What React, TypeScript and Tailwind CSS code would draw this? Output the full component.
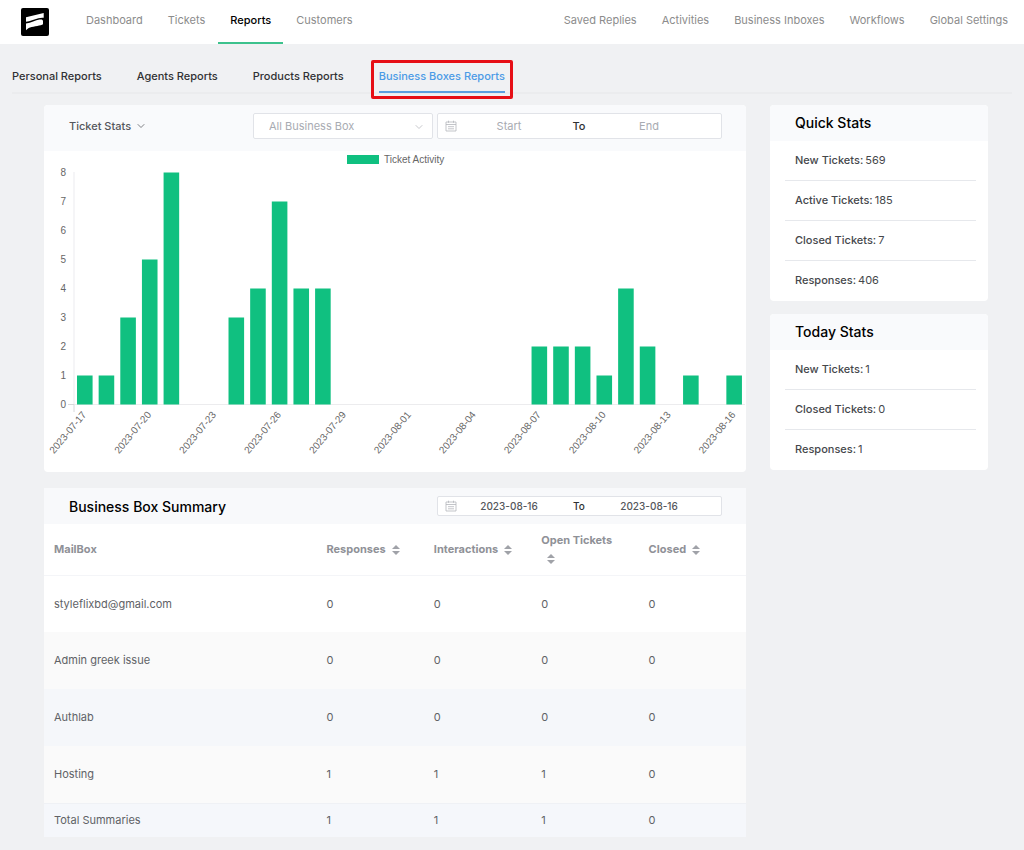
import clsx from 'clsx';
import { ChevronDown } from 'lucide-react';

const mainLinks = ['Dashboard', 'Tickets', 'Reports', 'Customers'];
const sideLinks = ['Saved Replies', 'Activities', 'Business Inboxes', 'Workflows', 'Global Settings'];
const reportTabs = ['Personal Reports', 'Agents Reports', 'Products Reports', 'Business Boxes Reports'];

const activity = [
  1, 1, 3, 5, 8, 0, 0, 3, 4, 7, 4, 4, 0, 0, 0, 0, 0, 0, 0, 0, 0, 2, 2, 2, 1, 4, 2, 0, 1, 0, 1,
];
const dateLabels = [
  '2023-07-17',
  '2023-07-20',
  '2023-07-23',
  '2023-07-26',
  '2023-07-29',
  '2023-08-01',
  '2023-08-04',
  '2023-08-07',
  '2023-08-10',
  '2023-08-13',
  '2023-08-16',
];

const columns = ['Responses', 'Interactions', 'Open Tickets', 'Closed'];
const mailboxes = [
  { name: 'styleflixbd@gmail.com', values: [0, 0, 0, 0], bg: 'bg-white' },
  { name: 'Admin greek issue', values: [0, 0, 0, 0], bg: 'bg-[#fafafa]' },
  { name: 'Authlab', values: [0, 0, 0, 0], bg: 'bg-[#f5f7fa]' },
  { name: 'Hosting', values: [1, 1, 1, 0], bg: 'bg-[#fafafa]' },
];

const quickStats = [
  { label: 'New Tickets', value: 569 },
  { label: 'Active Tickets', value: 185 },
  { label: 'Closed Tickets', value: 7 },
  { label: 'Responses', value: 406 },
];
const todayStats = [
  { label: 'New Tickets', value: 1 },
  { label: 'Closed Tickets', value: 0 },
  { label: 'Responses', value: 1 },
];

function Logo() {
  return (
    <svg viewBox="0 0 28 28" className="h-7 w-7" role="img" aria-label="Home">
      <rect width="28" height="28" rx="2" fill="#000" />
      <path d="M5 9.3L22.7 5V9.8C21 9.6 19 9.8 17.5 10.2C13 11.3 9 13.2 5 13.7Z" fill="#fff" />
      <path
        d="M5 15.6C10 15 14.5 12.2 18.5 11.5C20.8 11.1 22 11.7 22 13V16.3C20 17.6 13 18.3 9 19.6C7.2 20.3 6 21.2 5 22.3Z"
        fill="#fff"
      />
    </svg>
  );
}

function Header() {
  return (
    <header className="flex h-11 items-center justify-between bg-white pr-1 pl-[21px] text-[11px] text-[#8c8c8c]">
      <div className="flex h-full items-center">
        <a href="#home" className="mr-[25px]">
          <Logo />
        </a>
        <nav className="flex h-full gap-px">
          {mainLinks.map((link) => (
            <a
              key={link}
              href="#main"
              className={clsx(
                'h-full border-b-2 px-3 pt-3 leading-4',
                link === 'Reports' ? 'border-[#3dc28d] font-medium text-black' : 'border-transparent',
              )}
            >
              {link}
            </a>
          ))}
        </nav>
      </div>
      <nav className="flex h-full gap-px">
        {sideLinks.map((link) => (
          <a key={link} href="#side" className="px-3 pt-3 leading-4">
            {link}
          </a>
        ))}
      </nav>
    </header>
  );
}

function Tabs() {
  return (
    <nav className="mx-3 flex h-[50px] gap-[35px] border-b-2 border-[#ebecee] text-[11px] font-medium text-[#303133]">
      {reportTabs.map((tab) => {
        const active = tab === 'Business Boxes Reports';
        return (
          <a
            key={tab}
            href="#reports"
            className={clsx('relative h-[49px] pt-6 leading-4', active && 'border-b-2 border-[#5b9fe0] text-[#4c9be6]')}
          >
            {tab}
            {active && <span className="absolute -inset-x-2 top-4 -bottom-2 rounded-xs border-3 border-[#e60f16]" />}
          </a>
        );
      })}
    </nav>
  );
}

function DateIcon() {
  return (
    <svg viewBox="0 0 12 12" className="h-3 w-3 shrink-0" fill="none" stroke="#b4b6bb" strokeWidth="0.8">
      <path d="M1 2H11V11H1ZM1 4.5H11M3.5 0.7V2.8M8.5 0.7V2.8M3 6.7H9M3 8.8H9" />
    </svg>
  );
}

function DateRange({ name, start = '', end = '', compact = false }: {
  name: string;
  start?: string;
  end?: string;
  compact?: boolean;
}) {
  return (
    <div
      className={clsx(
        'flex w-[285px] items-center rounded-xs border border-[#e1e3e8] bg-white pr-5 pl-[7px] text-[#55575c]',
        compact ? 'h-5 text-[10px] font-medium' : 'h-[26px] text-[11px]',
      )}
    >
      <DateIcon />
      <input
        aria-label={`${name} start date`}
        placeholder="Start"
        defaultValue={start}
        className="w-0 flex-1 bg-transparent text-center outline-none placeholder:text-[#a8abb2]"
      />
      <span className="w-9 text-center font-medium text-[#303133]">To</span>
      <input
        aria-label={`${name} end date`}
        placeholder="End"
        defaultValue={end}
        className="w-0 flex-1 bg-transparent text-center outline-none placeholder:text-[#a8abb2]"
      />
    </div>
  );
}

function ActivityChart() {
  const left = 30;
  const right = 701;
  const base = 253;
  const unit = 29;
  const step = (right - left) / activity.length;

  return (
    <svg
      viewBox="0 0 702 321"
      className="block w-full font-['Liberation_Sans',sans-serif] text-[10px]"
      role="img"
      aria-label="Ticket Activity"
    >
      <rect x="303" y="4" width="32" height="9" fill="#10c080" />
      <text x="340" y="12" fill="#666">
        Ticket Activity
      </text>
      <path d={`M${left} 21V${base}`} stroke="#f5f5f7" strokeWidth="2" />
      <path d={`M${left} ${base + 0.5}H${right}`} stroke="#ececee" />
      <path d={`M24 ${base + 0.5}H${left}V${base + 8}`} stroke="#d8d8da" fill="none" />
      {[0, 1, 2, 3, 4, 5, 6, 7, 8].map((n) => (
        <text key={n} x="22" y={base - n * unit + 4} textAnchor="end" fill="#666">
          {n}
        </text>
      ))}
      {activity.map((count, i) => (
        <rect
          key={i}
          x={left + i * step + 3}
          y={base - count * unit + 0.5}
          width={step * 0.72}
          height={count * unit}
          fill="#10c080"
        />
      ))}
      {dateLabels.map((label, i) => (
        <text
          key={label}
          textAnchor="end"
          fill="#666"
          transform={`translate(${left + (i * 3 + 0.5) * step + 2} 264) rotate(-50)`}
        >
          {label}
        </text>
      ))}
    </svg>
  );
}

function TicketStats() {
  return (
    <section className="overflow-hidden rounded-sm bg-white">
      <div className="flex h-[46px] items-center justify-between bg-[#f9fafc] pr-6 pb-1 pl-[25px]">
        <button className="flex items-center gap-1 text-[11px] font-medium text-[#55575c]">
          Ticket Stats
          <ChevronDown size={12} strokeWidth={1.5} />
        </button>
        <div className="flex gap-1">
          <div className="relative">
            <select
              aria-label="Business box"
              className="block h-[26px] w-[180px] appearance-none rounded-xs border border-[#e1e3e8] bg-white pl-[15px] text-[11px] text-[#a8abb2]"
            >
              <option>All Business Box</option>
            </select>
            <ChevronDown
              size={12}
              strokeWidth={1.5}
              className="pointer-events-none absolute top-2 right-2 text-[#b4b6bb]"
            />
          </div>
          <DateRange name="Ticket stats" />
        </div>
      </div>
      <ActivityChart />
    </section>
  );
}

function SortIcon() {
  return (
    <svg viewBox="0 0 8 10" className="inline-block h-[10px] w-2" fill="#a0a2a8">
      <path d="M4 0L8 4H0ZM4 10L0 6H8Z" />
    </svg>
  );
}

function BoxSummary() {
  return (
    <section>
      <div className="flex h-9 items-center justify-between bg-[#f8f9fb] pr-6 pl-[25px]">
        <h2 className="text-[14px] font-medium text-black">Business Box Summary</h2>
        <DateRange name="Summary" start="2023-08-16" end="2023-08-16" compact />
      </div>
      <table className="w-full table-fixed text-left text-[11px] text-[#606266]">
        <thead>
          <tr className="h-[51px] border-b border-[#f4f5f8] bg-white text-[#8f9197]">
            <th className="px-[10px] font-bold">MailBox</th>
            {columns.map((col) => (
              <th key={col} className="w-[15.3%] px-[10px] leading-[18px] font-bold">
                <button className="block text-left">
                  {col}
                  <span className="inline-block px-[6px]">
                    <SortIcon />
                  </span>
                </button>
              </th>
            ))}
          </tr>
        </thead>
        <tbody>
          {mailboxes.map((box) => (
            <tr key={box.name} className={clsx('h-[57px]', box.bg)}>
              <td className="px-[10px]">{box.name}</td>
              {box.values.map((value, i) => (
                <td key={columns[i]} className="px-[10px]">
                  {value}
                </td>
              ))}
            </tr>
          ))}
        </tbody>
        <tfoot>
          <tr className="h-[34px] border-t border-[#eff1f5] bg-[#f5f7fb]">
            <td className="px-[10px]">Total Summaries</td>
            {[1, 1, 1, 0].map((value, i) => (
              <td key={columns[i]} className="px-[10px]">
                {value}
              </td>
            ))}
          </tr>
        </tfoot>
      </table>
    </section>
  );
}

function StatCard({ title, stats }: { title: string; stats: { label: string; value: number }[] }) {
  return (
    <section className="overflow-hidden rounded-sm bg-white">
      <h2 className="bg-[#f9fafc] py-2 pl-[25px] text-[14px] leading-5 font-medium text-black">{title}</h2>
      <ul className="pr-3 pl-[15px] text-[11px] text-[#45474b]">
        {stats.map((stat) => (
          <li
            key={stat.label}
            className="flex h-10 items-center gap-0.5 border-b border-[#e6e8ec] pl-[10px] last:border-transparent"
          >
            <span className="font-medium">{stat.label}:</span>
            {stat.value}
          </li>
        ))}
      </ul>
    </section>
  );
}

export default function App() {
  return (
    <div className="min-h-screen bg-[#f0f1f3] font-[Inter,sans-serif]">
      <Header />
      <Tabs />
      <main className="flex items-start gap-6 pt-[11px] pr-9 pb-3 pl-11">
        <div className="flex min-w-0 flex-1 flex-col gap-4">
          <TicketStats />
          <BoxSummary />
        </div>
        <aside className="flex w-[218px] flex-col gap-[13px]">
          <StatCard title="Quick Stats" stats={quickStats} />
          <StatCard title="Today Stats" stats={todayStats} />
        </aside>
      </main>
    </div>
  );
}
